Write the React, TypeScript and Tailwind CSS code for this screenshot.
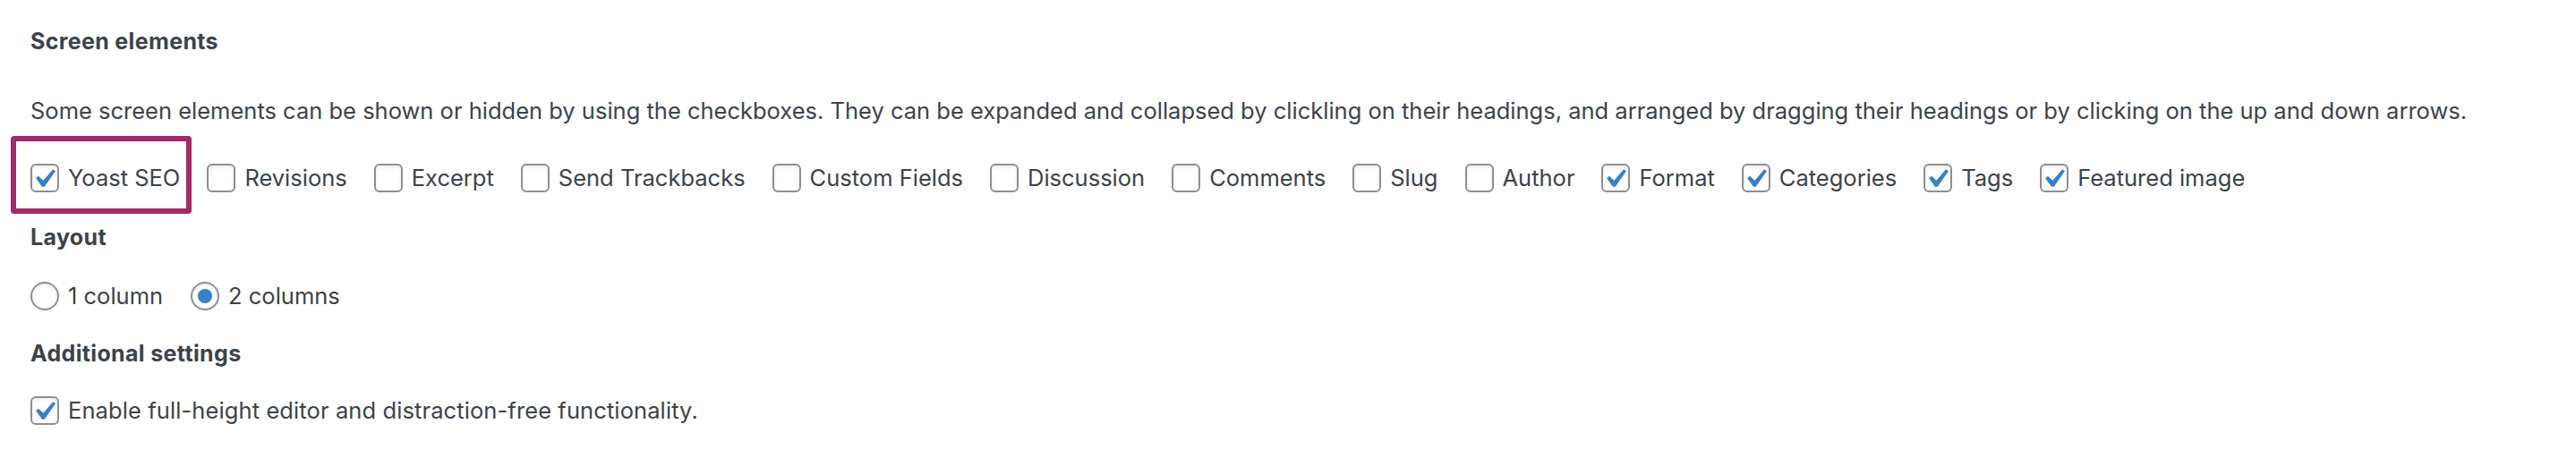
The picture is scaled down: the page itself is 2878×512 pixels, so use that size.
import React from "react";

const CHECK_PATH = "M14.83 4.89l1.34.94-5.81 8.38H9.02L5.78 9.67l1.34-1.25 2.57 2.4z";

function Check({ checked }: { checked: boolean }) {
  return (
    <span className="relative inline-block w-[32px] h-[32px] shrink-0 rounded-[6px] border-2 border-[#8c8f94] bg-white shadow-[inset_0_2px_4px_rgba(0,0,0,0.08)]">
      {checked && (
        <svg className="absolute left-[-8px] top-[-6px] w-[42px] h-[42px]" viewBox="0 0 20 20">
          <path d={CHECK_PATH} fill="#3582c4" />
        </svg>
      )}
    </span>
  );
}

function Radio({ checked }: { checked: boolean }) {
  return (
    <span className="flex items-center justify-center w-[32px] h-[32px] shrink-0 rounded-full border-2 border-[#8c8f94] bg-white shadow-[inset_0_2px_4px_rgba(0,0,0,0.08)]">
      {checked && <span className="w-[16px] h-[16px] rounded-full bg-[#3582c4]" />}
    </span>
  );
}

const items: { label: string; checked: boolean }[] = [
  { label: "Yoast SEO", checked: true },
  { label: "Revisions", checked: false },
  { label: "Excerpt", checked: false },
  { label: "Send Trackbacks", checked: false },
  { label: "Custom Fields", checked: false },
  { label: "Discussion", checked: false },
  { label: "Comments", checked: false },
  { label: "Slug", checked: false },
  { label: "Author", checked: false },
  { label: "Format", checked: true },
  { label: "Categories", checked: true },
  { label: "Tags", checked: true },
  { label: "Featured image", checked: true },
];

export default function App() {
  return (
    <div className="w-full h-[512px] bg-white text-[#3c434a] font-['Inter','Liberation_Sans',sans-serif] pl-[34px] pt-[30px]">
      <div className="text-[25px] leading-[32px] font-bold tracking-[0.35px] text-[#3c434a]">Screen elements</div>
      <p className="mt-[44px] text-[25.5px] leading-[36px]">
        Some screen elements can be shown or hidden by using the checkboxes. They can be expanded and collapsed by clickling on their headings, and arranged by dragging their headings or by clicking on the up and down arrows.
      </p>
      <div className="mt-[41px] flex items-center gap-[30px] text-[25.5px] leading-[32px]">
        {items.map((it, i) => (
          <label key={it.label} className="relative flex items-center gap-[10px]">
            <Check checked={it.checked} />
            <span>{it.label}</span>
            {i === 0 && (
              <span className="absolute left-[-22px] top-[-31px] bottom-[-24px] right-[-13px] border-[6px] border-[#a4286a] rounded-[4px] pointer-events-none" />
            )}
          </label>
        ))}
      </div>
      <div className="mt-[34px] text-[25px] leading-[32px] font-bold tracking-[0.35px]">Layout</div>
      <div className="mt-[34px] flex items-center gap-[31px] text-[25.5px] leading-[32px]">
        <label className="flex items-center gap-[10px]">
          <Radio checked={false} />
          <span>1 column</span>
        </label>
        <label className="flex items-center gap-[10px]">
          <Radio checked={true} />
          <span>2 columns</span>
        </label>
      </div>
      <div className="mt-[32px] text-[25px] leading-[32px] font-bold tracking-[0.35px]">Additional settings</div>
      <div className="mt-[32px] flex items-center text-[25.5px] leading-[32px]">
        <label className="flex items-center gap-[10px]">
          <Check checked={true} />
          <span className="tracking-[0.1px]">Enable full-height editor and distraction-free functionality.</span>
        </label>
      </div>
    </div>
  );
}
